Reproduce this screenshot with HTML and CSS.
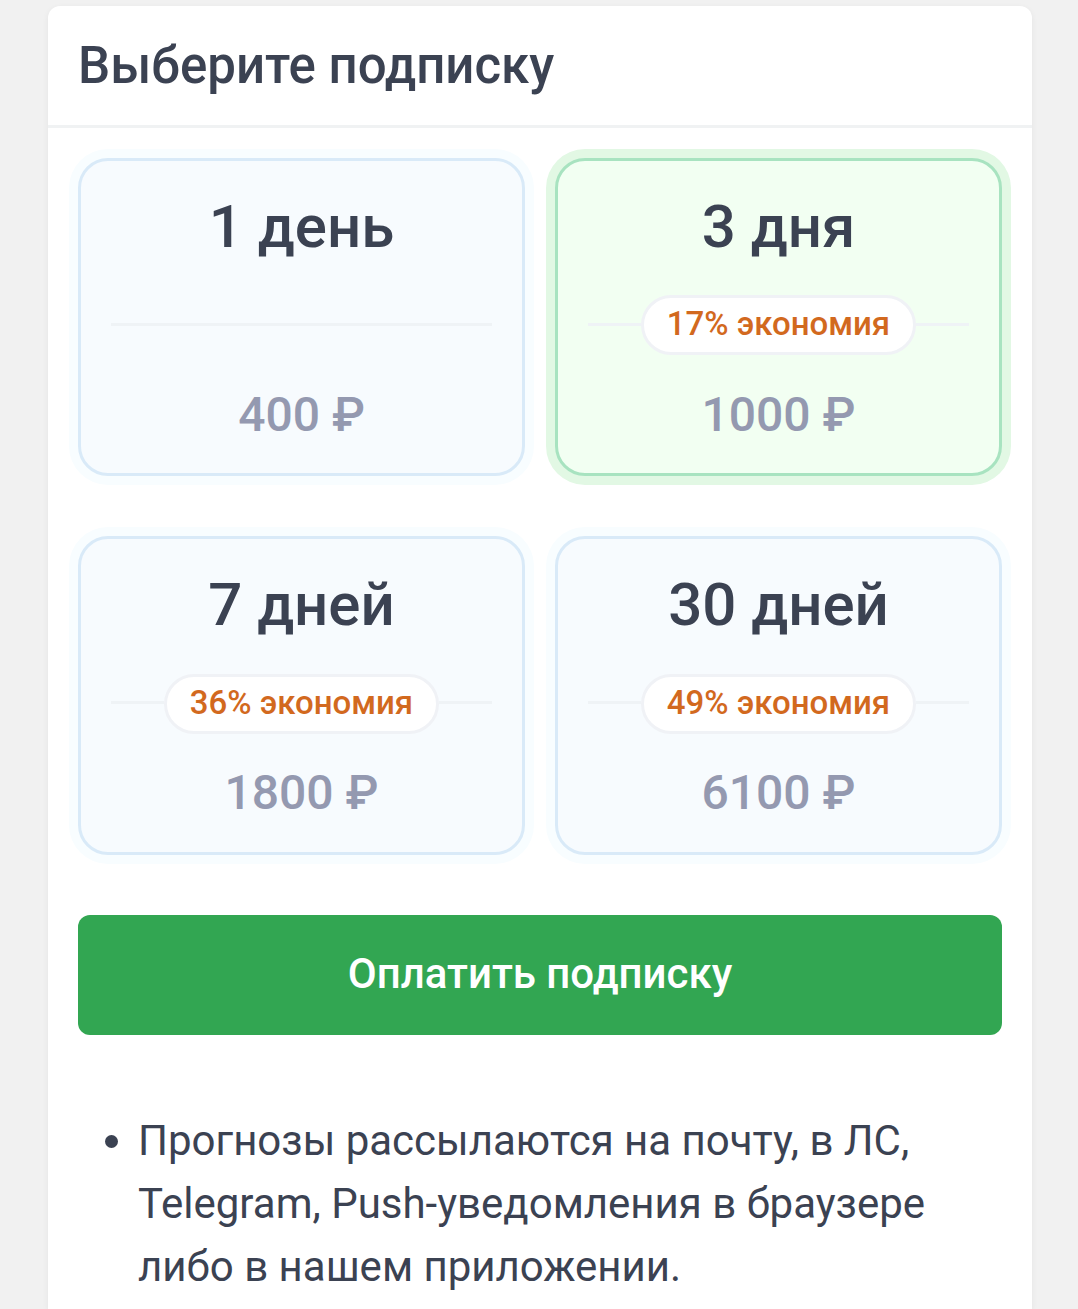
FILE: index.html
```
<!DOCTYPE html>
<html lang="ru">

<head>
    <meta charset="UTF-8">
    <meta name="viewport" content="width=device-width, initial-scale=1.0">
    <title>Выберите подписку</title>
    <link rel="stylesheet" href="styles.css">
</head>

<body>
    <main class="panel">
        <header class="panel-header">
            <h1>Выберите подписку</h1>
        </header>

        <div class="panel-body">
            <div class="plans">
                <div class="plan">
                    <h2>1 день</h2>
                    <div class="divider"></div>
                    <p class="price">400 ₽</p>
                </div>
                <div class="plan active">
                    <h2>3 дня</h2>
                    <div class="divider"><span class="saving">17% экономия</span></div>
                    <p class="price">1000 ₽</p>
                </div>
                <div class="plan">
                    <h2>7 дней</h2>
                    <div class="divider"><span class="saving">36% экономия</span></div>
                    <p class="price">1800 ₽</p>
                </div>
                <div class="plan">
                    <h2>30 дней</h2>
                    <div class="divider"><span class="saving">49% экономия</span></div>
                    <p class="price">6100 ₽</p>
                </div>
            </div>

            <button type="button" class="pay">Оплатить подписку</button>

            <ul class="notes">
                <li>Прогнозы рассылаются на почту, в ЛС, Telegram, Push-уведомления в браузере либо в нашем приложении.</li>
            </ul>
        </div>
    </main>
</body>

</html>
```
FILE: styles.css
```
* {
    box-sizing: border-box;
}

body {
    margin: 0;
    background: #f1f1f1;
    color: #3b4252;
    font-family: Roboto, sans-serif;
}

h1,
h2,
p {
    margin: 0;
    font-weight: 500;
}

.panel {
    width: 984px;
    height: 1303px;
    margin: 6px auto 0 48px;
    background: #fff;
    border-radius: 12px 12px 0 0;
    box-shadow: 0 2px 6px rgba(0, 0, 0, 0.06);
}

.panel-header {
    height: 122px;
    padding: 30px 30px 0;
    border-bottom: 3px solid #f0f2f3;
}

.panel-header h1 {
    font-size: 51px;
    line-height: 60px;
}

.panel-body {
    padding: 30px 30px 0;
}

.plans {
    display: grid;
    grid-template-columns: 447px 447px;
    gap: 60px 30px;
}

.plan {
    height: 318.4px;
    padding: 30px;
    border: 3px solid #d9eaf8;
    border-radius: 30px;
    background: #f7fbfe;
    box-shadow: 0 0 0 9px #f8fdff;
    text-align: center;
}

.plan.active {
    border-color: #a8e3c0;
    background: #f2fff2;
    box-shadow: 0 0 0 9px #e2f8e4;
}

.plan h2 {
    font-size: 60px;
    line-height: 72px;
}

.divider {
    display: flex;
    align-items: center;
    height: 60px;
    margin-top: 32px;
}

.divider::before,
.divider::after {
    content: "";
    flex: 1;
    height: 3px;
    margin-top: -2px;
    background: #eff3f6;
}

.saving {
    height: 60px;
    margin-top: 0.6px;
    padding: 0 23px;
    border: 3px solid #f0f2f6;
    border-radius: 30px;
    background: #fff;
    color: #d2691e;
    font-size: 33px;
    font-weight: 500;
    line-height: 52px;
}

.price {
    margin-top: 30px;
    color: #9499b0;
    font-size: 48px;
    line-height: 60px;
}

.pay {
    display: block;
    width: 100%;
    height: 120px;
    margin-top: 60px;
    padding: 0 0 2px;
    border: 0;
    border-radius: 12px;
    background: #32a652;
    color: #fff;
    font: 500 42px/60px Roboto, sans-serif;
}

.notes {
    margin: 74px 0 0;
    padding-left: 60px;
    font-size: 42px;
    line-height: 63px;
}
```
